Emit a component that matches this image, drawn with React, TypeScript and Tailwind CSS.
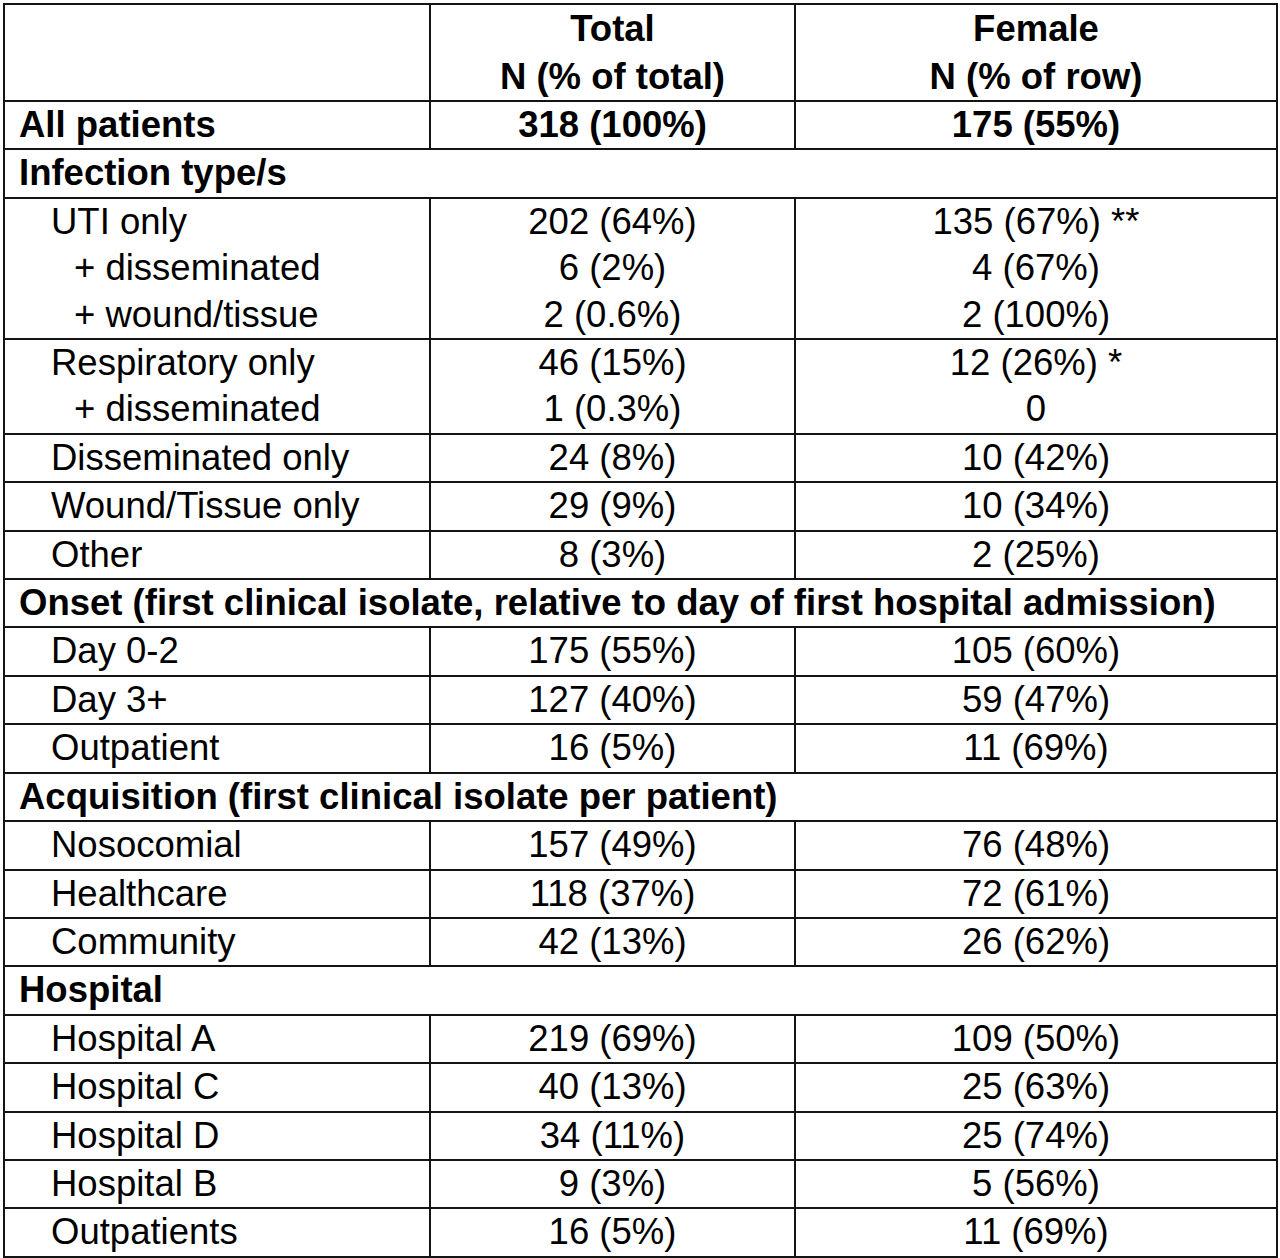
import React from 'react';

type Row =
  | { kind: 'section'; label: string }
  | { kind: 'data'; labels: string[]; total: string[]; female: string[]; bold?: boolean; indent?: number[] };

const rows: Row[] = [
  { kind: 'data', labels: ['All patients'], total: ['318 (100%)'], female: ['175 (55%)'], bold: true },
  { kind: 'section', label: 'Infection type/s' },
  {
    kind: 'data',
    labels: ['UTI only', '+ disseminated', '+ wound/tissue'],
    total: ['202 (64%)', '6 (2%)', '2 (0.6%)'],
    female: ['135 (67%) **', '4 (67%)', '2 (100%)'],
    indent: [0, 1, 1],
  },
  {
    kind: 'data',
    labels: ['Respiratory only', '+ disseminated'],
    total: ['46 (15%)', '1 (0.3%)'],
    female: ['12 (26%) *', '0'],
    indent: [0, 1],
  },
  { kind: 'data', labels: ['Disseminated only'], total: ['24 (8%)'], female: ['10 (42%)'] },
  { kind: 'data', labels: ['Wound/Tissue only'], total: ['29 (9%)'], female: ['10 (34%)'] },
  { kind: 'data', labels: ['Other'], total: ['8 (3%)'], female: ['2 (25%)'] },
  { kind: 'section', label: 'Onset (first clinical isolate, relative to day of first hospital admission)' },
  { kind: 'data', labels: ['Day 0-2'], total: ['175 (55%)'], female: ['105 (60%)'] },
  { kind: 'data', labels: ['Day 3+'], total: ['127 (40%)'], female: ['59 (47%)'] },
  { kind: 'data', labels: ['Outpatient'], total: ['16 (5%)'], female: ['11 (69%)'] },
  { kind: 'section', label: 'Acquisition (first clinical isolate per patient)' },
  { kind: 'data', labels: ['Nosocomial'], total: ['157 (49%)'], female: ['76 (48%)'] },
  { kind: 'data', labels: ['Healthcare'], total: ['118 (37%)'], female: ['72 (61%)'] },
  { kind: 'data', labels: ['Community'], total: ['42 (13%)'], female: ['26 (62%)'] },
  { kind: 'section', label: 'Hospital' },
  { kind: 'data', labels: ['Hospital A'], total: ['219 (69%)'], female: ['109 (50%)'] },
  { kind: 'data', labels: ['Hospital C'], total: ['40 (13%)'], female: ['25 (63%)'] },
  { kind: 'data', labels: ['Hospital D'], total: ['34 (11%)'], female: ['25 (74%)'] },
  { kind: 'data', labels: ['Hospital B'], total: ['9 (3%)'], female: ['5 (56%)'] },
  { kind: 'data', labels: ['Outpatients'], total: ['16 (5%)'], female: ['11 (69%)'] },
];

const cell = 'border-2 border-[#141414] p-0 align-top leading-[46.4px]';

export default function App() {
  return (
    <div className="min-h-[1258px] w-[1280px] bg-white pl-[3px] pt-[3px] font-['Liberation_Sans',Arial,sans-serif] text-[36.5px] text-black">
      <table className="w-[1273px] table-fixed border-collapse">
        <colgroup>
          <col className="w-[426px]" />
          <col className="w-[365px]" />
          <col className="w-[482px]" />
        </colgroup>
        <thead>
          <tr>
            <th className={`${cell} leading-[47.5px]`}></th>
            <th className={`${cell} text-center font-bold leading-[47.5px]`}>
              <div>Total</div>
              <div>N (% of total)</div>
            </th>
            <th className={`${cell} text-center font-bold leading-[47.5px]`}>
              <div>Female</div>
              <div>N (% of row)</div>
            </th>
          </tr>
        </thead>
        <tbody>
          {rows.map((row, i) =>
            row.kind === 'section' ? (
              <tr key={i}>
                <td colSpan={3} className={`${cell} whitespace-nowrap pl-[14px] font-bold`}>
                  {row.label}
                </td>
              </tr>
            ) : (
              <tr key={i} className={row.bold ? 'font-bold' : ''}>
                <td className={`${cell} whitespace-nowrap`}>
                  {row.labels.map((l, j) => (
                    <div
                      key={j}
                      className={
                        row.bold ? 'pl-[14px]' : row.indent && row.indent[j] ? 'pl-[69px]' : 'pl-[46px]'
                      }
                    >
                      {l}
                    </div>
                  ))}
                </td>
                <td className={`${cell} text-center`}>
                  {row.total.map((t, j) => (
                    <div key={j}>{t}</div>
                  ))}
                </td>
                <td className={`${cell} text-center`}>
                  {row.female.map((f, j) => (
                    <div key={j} className="whitespace-pre">{f}</div>
                  ))}
                </td>
              </tr>
            )
          )}
        </tbody>
      </table>
    </div>
  );
}
